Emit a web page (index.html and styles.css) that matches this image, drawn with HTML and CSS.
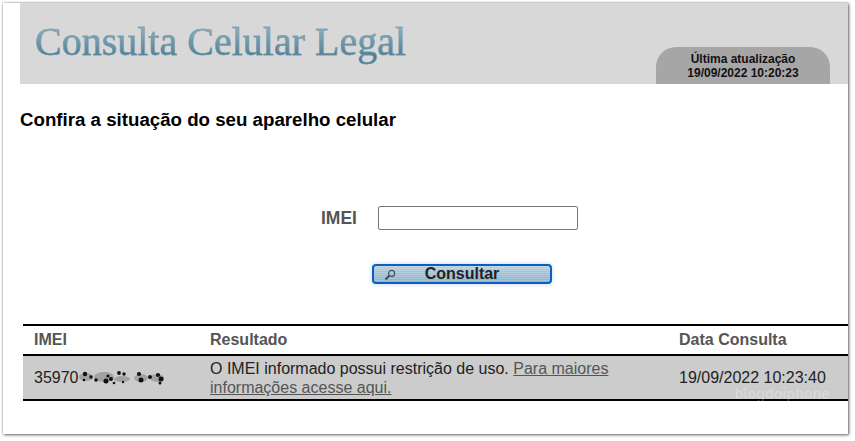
FILE: index.html
```html
<!DOCTYPE html>
<html lang="pt">
<head>
<meta charset="utf-8">
<title>Consulta Celular Legal</title>
<link rel="stylesheet" href="styles.css">
</head>
<body>
<div class="window">
  <header class="banner">
    <h1 class="logo">Consulta Celular Legal</h1>
    <div class="updated">Última atualização<br>19/09/2022 10:20:23</div>
  </header>
  <h2 class="intro">Confira a situação do seu aparelho celular</h2>
  <form class="form">
    <div class="field">
      <label class="label" for="imei">IMEI</label>
      <input class="input" id="imei" type="text">
    </div>
    <button class="btn" type="button">
      <svg class="lens" width="12" height="12" viewBox="0 0 12 12" aria-hidden="true"><circle cx="7.6" cy="4.4" r="3" fill="none" stroke="#4a5560" stroke-width="1.2"/><path d="M5.4 6.6 1.5 10.5" stroke="#3d4650" stroke-width="1.8" fill="none"/></svg>
      <span>Consultar</span>
    </button>
  </form>
  <table class="results">
    <colgroup><col class="c1"><col class="c2"><col class="c3"></colgroup>
    <thead>
      <tr><th>IMEI</th><th>Resultado</th><th>Data Consulta</th></tr>
    </thead>
    <tbody>
      <tr>
        <td><span class="imei">35970<svg class="smudge" width="92" height="20" viewBox="0 0 92 20" aria-hidden="true"><g class="blur-soft" fill="#6f6f6f"><ellipse cx="8" cy="10" rx="7" ry="4"/><ellipse cx="26" cy="10" rx="10" ry="5"/><ellipse cx="44" cy="12" rx="8" ry="3"/><ellipse cx="63" cy="11" rx="7" ry="4"/><ellipse cx="79" cy="11" rx="7" ry="4"/></g><g class="blur-hard" fill="#111"><circle cx="7" cy="7" r="2.2"/><circle cx="13" cy="10" r="1.7"/><circle cx="6" cy="13" r="1.3"/><circle cx="18" cy="13" r="1.8"/><circle cx="28" cy="14" r="2.5"/><circle cx="33" cy="12" r="2"/><circle cx="30" cy="9" r="1.6"/><circle cx="41" cy="6" r="1.9"/><circle cx="46" cy="7" r="1.7"/><circle cx="36" cy="16" r="1.3"/><circle cx="45" cy="15" r="1.2"/><circle cx="61" cy="7" r="2.1"/><circle cx="63" cy="13" r="2.5"/><circle cx="72" cy="10" r="2"/><circle cx="80" cy="8" r="2.1"/><circle cx="83" cy="12" r="2.5"/><circle cx="82" cy="16" r="1.5"/></g></svg></span></td>
        <td>O IMEI informado possui restrição de uso. <a class="more" href="#">Para maiores informações acesse aqui.</a></td>
        <td>19/09/2022 10:23:40</td>
      </tr>
    </tbody>
  </table>
  <span class="mark">blogdoiphone</span>
</div>
</body>
</html>
```
FILE: styles.css
```css
html, body { margin: 0; background: #fff; }
body {
  width: 855px;
  height: 441px;
  overflow: hidden;
  padding: 3px 0 0 3px;
  box-sizing: border-box;
  font-family: "Liberation Sans", Arial, sans-serif;
}
.window {
  position: relative;
  width: 845px;
  height: 431px;
  box-sizing: border-box;
  background: #fff;
  padding-left: 17px;
  box-shadow: 0 0 2px rgba(0,0,0,.35), 1px 1px 3px rgba(0,0,0,.55);
}
.banner {
  height: 81px;
  background: #d8d8d8;
  display: flex;
  justify-content: space-between;
  align-items: flex-end;
  padding: 0 18px 0 15px;
}
.logo {
  margin: 0 0 17px;
  align-self: flex-end;
  font: 400 40px/50px "Liberation Serif", "Times New Roman", serif;
  background: linear-gradient(180deg, #8aacbd 25%, #4f7e95 80%);
  -webkit-background-clip: text;
  background-clip: text;
  color: transparent;
  -webkit-text-stroke: .4px #6f98ab;
}
.updated {
  width: 174px;
  height: 37px;
  box-sizing: border-box;
  padding-top: 5px;
  background: #a6a6a6;
  border-radius: 20px 20px 0 0;
  font-size: 12px;
  line-height: 14px;
  font-weight: 700;
  text-align: center;
  color: #111;
}
.intro {
  margin: 26px 0 0;
  font-size: 18.7px;
  line-height: 20px;
  font-weight: 700;
  color: #000;
}
.form {
  display: flex;
  flex-direction: column;
  align-items: flex-start;
  padding-top: 76px;
}
.field {
  display: flex;
  align-items: center;
  gap: 21px;
  margin-left: 301px;
}
.label {
  font-size: 17.5px;
  font-weight: 700;
  color: #555;
}
.input {
  width: 200px;
  height: 24px;
  box-sizing: border-box;
  border: 1px solid #767676;
  border-radius: 2px;
  background: #fff;
  padding: 0;
}
.btn {
  position: relative;
  margin: 34px 0 0 352px;
  width: 180px;
  height: 20px;
  box-sizing: border-box;
  border: 2px solid #0b5fc2;
  border-radius: 4px;
  padding: 0;
  box-shadow: 0 0 4px rgba(70,130,210,.35);
  background:
    repeating-linear-gradient(180deg, rgba(255,255,255,.14) 0 1px, rgba(0,0,0,.02) 1px 2px),
    linear-gradient(180deg, #bdd3e1 0%, #a3c2d6 50%, #94b7ce 100%);
  font: 700 16px/16px "Liberation Sans", Arial, sans-serif;
  color: #222;
  text-align: center;
}
.lens {
  position: absolute;
  left: 10px;
  top: 3px;
}
.results {
  margin: 40px 0 0 3px;
  width: 825px;
  border-collapse: collapse;
  table-layout: fixed;
  font-size: 16px;
  color: #333;
}
.c1 { width: 176px; }
.c2 { width: 469px; }
.results th {
  height: 28px;
  padding: 0 0 0 11px;
  text-align: left;
  font-weight: 700;
  color: #555;
  border-top: 2px solid #000;
  border-bottom: 2px solid #000;
}
.results td {
  height: 43px;
  padding: 0 0 0 11px;
  background: #ccc;
  line-height: 19px;
  color: #222;
  border-bottom: 2px solid #000;
}
.results td:nth-child(2) { padding-right: 39px; }
.imei { white-space: nowrap; }
.smudge {
  vertical-align: middle;
  margin: -2px 0 0 -1px;
  filter: blur(.6px);
}
.blur-soft { opacity: .45; }
.more { color: #555; text-decoration: underline; }
.mark {
  position: absolute;
  left: 732px;
  top: 383px;
  font-size: 14.5px;
  letter-spacing: .7px;
  color: rgba(255,255,255,.3);
}
```
